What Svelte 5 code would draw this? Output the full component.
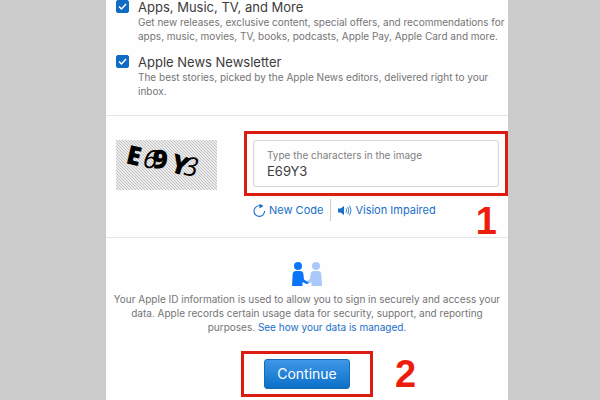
<script>
  const subscriptions = [
    {
      id: 'apps',
      title: 'Apps, Music, TV, and More',
      text: 'Get new releases, exclusive content, special offers, and recommendations for apps, music, movies, TV, books, podcasts, Apple Pay, Apple Card and more.'
    },
    {
      id: 'news',
      title: 'Apple News Newsletter',
      text: 'The best stories, picked by the Apple News editors, delivered right to your inbox.'
    }
  ];

  let selected = $state({ apps: true, news: true });
  let code = $state('E69Y3');
</script>

<div class="page">
  <main class="panel">
    <section class="subscriptions">
      {#each subscriptions as item (item.id)}
        <div class="subscription">
          <input type="checkbox" id={item.id} bind:checked={selected[item.id]} />
          <label for={item.id}>
            <span class="title">{item.title}</span>
            <span class="text">{item.text}</span>
          </label>
        </div>
      {/each}
    </section>

    <section class="captcha">
      <svg class="captcha-image" viewBox="0 0 101 50" role="img" aria-label="Captcha">
        <defs>
          <pattern id="hatch" width="3" height="3" patternUnits="userSpaceOnUse">
            <rect width="3" height="3" fill="#ececec" />
            <path d="M-1 -1L4 4M-1 2L1 4M2 -1L4 1" stroke="#bcbcbc" stroke-width="0.9" />
          </pattern>
        </defs>
        <rect width="101" height="50" fill="url(#hatch)" />
        <text class="heavy" transform="translate(9 23) rotate(13)">E</text>
        <text class="thin" transform="translate(26 27) rotate(8)">6</text>
        <text class="heavy" transform="translate(36 28) rotate(4)">9</text>
        <text class="heavy" transform="translate(53 31) rotate(18)">Y</text>
        <text class="thin" transform="translate(67 35) rotate(6)">3</text>
      </svg>

      <div class="entry">
        <div class="highlight">
          <div class="field">
            <label for="code">Type the characters in the image</label>
            <input type="text" id="code" bind:value={code} />
          </div>
        </div>
        <div class="actions">
          <button type="button">
            <svg width="13" height="13" viewBox="0 0 13 13" fill="none" stroke="currentColor">
              <path d="M11.6 7A5.3 5.3 0 1 1 6.3 1.8H8.5" stroke-width="1.1" />
              <path d="M6.5 -0.4L10.5 2L6.5 4.6Z" fill="currentColor" stroke="none" />
            </svg>
            New Code
          </button>
          <button type="button">
            <svg width="14" height="11" viewBox="0 0 14 11" fill="none" stroke="currentColor">
              <path d="M0 3.5H2.5L6 1V10L2.5 7.5H0Z" fill="currentColor" stroke="none" />
              <path d="M8 3.5Q9 5.5 8 7.5M9.8 2Q11.6 5.5 9.8 9M11.6 0.7Q14.4 5.5 11.6 10.3" stroke-width="0.9" />
            </svg>
            Vision Impaired
          </button>
          <span class="step">1</span>
        </div>
      </div>
    </section>

    <section class="privacy">
      <svg width="30" height="24" viewBox="0 0 30 24">
        <g fill="#abc8fb">
          <circle cx="24" cy="4" r="4" />
          <path d="M18.5 13Q18.5 9 22 9H26Q29 9 29.3 12L30 24H19.5V20L16 22L13 20.5L18 17Z" />
        </g>
        <g fill="#0a75f8">
          <circle cx="6" cy="4" r="4" />
          <path d="M11.5 13Q11.5 9 8 9H4Q1 9 0.7 12L0 24H10.5V20L14 21.8Q16.5 22.5 16.5 20.5L12 17.5Z" />
        </g>
      </svg>
      <p>
        Your Apple ID information is used to allow you to sign in securely and access your data. Apple
        records certain usage data for security, support, and reporting purposes.
        <a href="#privacy">See how your data is managed.</a>
      </p>
      <div class="submit">
        <span></span>
        <div class="highlight">
          <button type="button" class="continue">Continue</button>
        </div>
        <span class="step">2</span>
      </div>
    </section>
  </main>
</div>

<style>
  :global(body) {
    background: #cbcbcb;
    overflow: hidden;
  }

  .page {
    padding: 0 92px 0 106px;
    font-family: Inter, Roboto, sans-serif;
    color: #3c3c3c;
  }

  .panel {
    background: #fefefe;
  }

  .subscriptions {
    display: flex;
    flex-direction: column;
    gap: 12px;
    padding: 0 2px 17px 10px;
    border-bottom: 1px solid #e6e6e6;
  }

  .subscription {
    display: flex;
    gap: 9px;
  }

  input[type='checkbox'] {
    appearance: none;
    flex: none;
    width: 13px;
    height: 13px;
    margin: 0;
    border-radius: 2px;
    border: 1px solid #0f6bc4;
  }

  input[type='checkbox']:checked {
    background: #0f6bc4 url("data:image/svg+xml,%3Csvg xmlns='http://www.w3.org/2000/svg' viewBox='0 0 11 11'%3E%3Cpath d='M2 5.5L4.5 8L9 3' fill='none' stroke='white' stroke-width='1.5'/%3E%3C/svg%3E");
  }

  .title,
  .text {
    display: block;
  }

  .title {
    font-size: 13px;
    line-height: 15px;
  }

  .text {
    font-size: 10px;
    line-height: 14px;
    color: #757575;
  }

  .captcha {
    display: flex;
    align-items: flex-start;
    gap: 27px;
    padding: 15px 0 0 10px;
    border-bottom: 1px solid #e6e6e6;
  }

  .captcha-image {
    flex: none;
    width: 101px;
    height: 50px;
    margin-top: 9px;
  }

  .heavy {
    font: 800 26px 'Open Sans', sans-serif;
  }

  .thin {
    font: italic 26px 'Open Sans', sans-serif;
  }

  .entry {
    flex: 1;
  }

  .highlight {
    border: 3px solid #dc1c10;
  }

  .entry .highlight {
    padding: 6px;
  }

  .field {
    display: flex;
    flex-direction: column;
    padding: 7px 13px 6px;
    border: 1px solid #d6d6d6;
    border-radius: 3px;
  }

  .field label {
    font-size: 10px;
    line-height: 14px;
    color: #808080;
  }

  .field input {
    width: 100%;
    height: 18px;
    padding: 0;
    border: 0;
    outline: 0;
    background: none;
    font: 13px/18px Inter, sans-serif;
    color: #3c3c3c;
  }

  .actions {
    display: flex;
    align-items: flex-start;
    padding: 3px 11px 0 9px;
  }

  .actions button {
    display: flex;
    align-items: center;
    gap: 3px;
    height: 22px;
    padding: 0 7px 0 0;
    border: 0;
    background: none;
    font: 11px/22px Inter, sans-serif;
    color: #1a6fc9;
  }

  .actions button + button {
    padding: 0 0 0 7px;
    border-left: 1px solid #ccc;
  }

  .step {
    font: bold 38px/32px 'Liberation Sans', sans-serif;
    color: #ee1c0c;
  }

  .actions .step {
    margin-left: auto;
    padding-top: 6px;
  }

  .privacy {
    padding: 24px 5px 8px;
    text-align: center;
  }

  .privacy svg {
    display: block;
    margin: 0 auto;
  }

  p {
    margin: 6px 0 17px;
    font-size: 10px;
    line-height: 14px;
    color: #757575;
  }

  a {
    color: #1a6fc9;
    text-decoration: none;
  }

  .submit {
    display: grid;
    grid-template-columns: 1fr auto 1fr;
    align-items: center;
  }

  .submit .highlight {
    padding: 5px 20px;
  }

  .submit .step {
    padding-left: 22px;
    text-align: left;
  }

  .continue {
    display: block;
    width: 86px;
    height: 30px;
    padding: 0;
    border: 1px solid #1a6bb0;
    border-radius: 3px;
    background: linear-gradient(#3f97e6, #0b70c9);
    font: 14px/28px Inter, sans-serif;
    color: #fff;
  }
</style>
